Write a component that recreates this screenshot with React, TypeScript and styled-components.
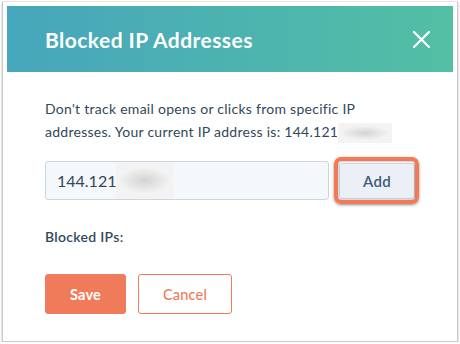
import React from "react";
import styled, { createGlobalStyle } from "styled-components";

const Global = createGlobalStyle`
  html, body { margin: 0; padding: 0; background: #ffffff; }
  body { font-family: Lato, "Open Sans", sans-serif; }
  * { box-sizing: border-box; }
`;

const Frame = styled.div`
  margin: 1px 0 0 2px;
  width: 456px;
  height: 341px;
  border: 1px solid #c9c9c9;
  border-top-color: #e6e6e6;
  box-shadow: 0 2px 2px rgba(0, 0, 0, 0.28);
  padding: 4px 4px 0 4px;
  background: #ffffff;
`;

const Header = styled.header`
  height: 66px;
  display: flex;
  align-items: center;
  justify-content: space-between;
  padding: 0 22px 0 38px;
  background: linear-gradient(to right, #46a6bc, #53bfa4);
`;

const Title = styled.h1`
  margin: 0;
  color: #ffffff;
  font-family: Lato, sans-serif;
  font-weight: 700;
  font-size: 21px;
  letter-spacing: 0.45px;
`;

const Close = styled.button`
  width: 20px;
  height: 20px;
  padding: 0;
  border: 0;
  background: transparent;
  display: flex;
  align-items: center;
  justify-content: center;
  cursor: pointer;
`;

const Body = styled.div`
  padding: 25px 38px 0 38px;
  color: #33475b;
`;

const Intro = styled.p`
  margin: 0;
  max-width: 350px;
  font-size: 14px;
  line-height: 23px;
  letter-spacing: 0.27px;
  color: #33475b;
`;

const Redacted = styled.span<{ $w: number; $h: number }>`
  display: inline-block;
  vertical-align: middle;
  width: ${(p) => p.$w}px;
  height: ${(p) => p.$h}px;
  background: radial-gradient(ellipse 45% 35% at 50% 50%, rgba(150, 150, 150, 0.35), rgba(150, 150, 150, 0) 100%), #f3f3f3;
`;

const Row = styled.div`
  margin-top: 18px;
  display: flex;
  align-items: center;
  gap: 10px;
`;

const Field = styled.div`
  width: 284px;
  height: 39px;
  display: flex;
  align-items: center;
  padding-left: 11px;
  background: #f5f8fa;
  border: 1px solid #cbd6e2;
  border-radius: 3px;
  font-size: 16px;
  color: #33475b;
`;

const AddWrap = styled.div`
  position: relative;
`;

const AddButton = styled.button`
  width: 76px;
  height: 36px;
  background: #eaf0f6;
  border: 1px solid #cbd6e2;
  border-radius: 3px;
  font-family: Lato, sans-serif;
  font-size: 15px;
  font-weight: 600;
  letter-spacing: 0.3px;
  color: #425b76;
  cursor: pointer;
`;

const Ring = styled.span`
  position: absolute;
  left: -5px;
  top: -6px;
  right: -4px;
  bottom: -5px;
  border: 4px solid #f47a55;
  border-radius: 7px;
  box-shadow: 0 1px 3px rgba(0, 0, 0, 0.45), inset 0 0 2px rgba(0, 0, 0, 0.6);
  pointer-events: none;
`;

const Label = styled.div`
  margin-top: 27px;
  font-size: 14px;
  font-weight: 600;
  line-height: 20px;
  letter-spacing: 0.3px;
  color: #33475b;
`;

const Actions = styled.div`
  margin-top: 27px;
  display: flex;
  gap: 12px;
`;

const Btn = styled.button<{ $primary?: boolean; $w: number }>`
  width: ${(p) => p.$w}px;
  height: 40px;
  border-radius: 3px;
  border: 1px solid #ef7b5b;
  background: ${(p) => (p.$primary ? "#ef7b5b" : "#ffffff")};
  color: ${(p) => (p.$primary ? "#ffffff" : "#ef7b5b")};
  font-family: Lato, sans-serif;
  font-size: 14.5px;
  font-weight: ${(p) => (p.$primary ? 700 : 500)};
  letter-spacing: 0.2px;
  cursor: pointer;
`;

export default function App() {
  return (
    <>
      <Global />
      <Frame>
        <Header>
          <Title>Blocked IP Addresses</Title>
          <Close aria-label="Close">
            <svg width="17" height="17" viewBox="0 0 17 17">
              <path d="M1 1 L16 16 M16 1 L1 16" stroke="#ffffff" strokeWidth="2.2" strokeLinecap="square" />
            </svg>
          </Close>
        </Header>
        <Body>
          <Intro>
            Don't track email opens or clicks from specific IP addresses. Your current IP address is: 144.121
            <Redacted $w={54} $h={20} />
          </Intro>
          <Row>
            <Field>
              144.121
              <Redacted $w={57} $h={37} />
            </Field>
            <AddWrap>
              <AddButton>Add</AddButton>
              <Ring />
            </AddWrap>
          </Row>
          <Label>Blocked IPs:</Label>
          <Actions>
            <Btn $primary $w={81}>Save</Btn>
            <Btn $w={94}>Cancel</Btn>
          </Actions>
        </Body>
      </Frame>
    </>
  );
}
